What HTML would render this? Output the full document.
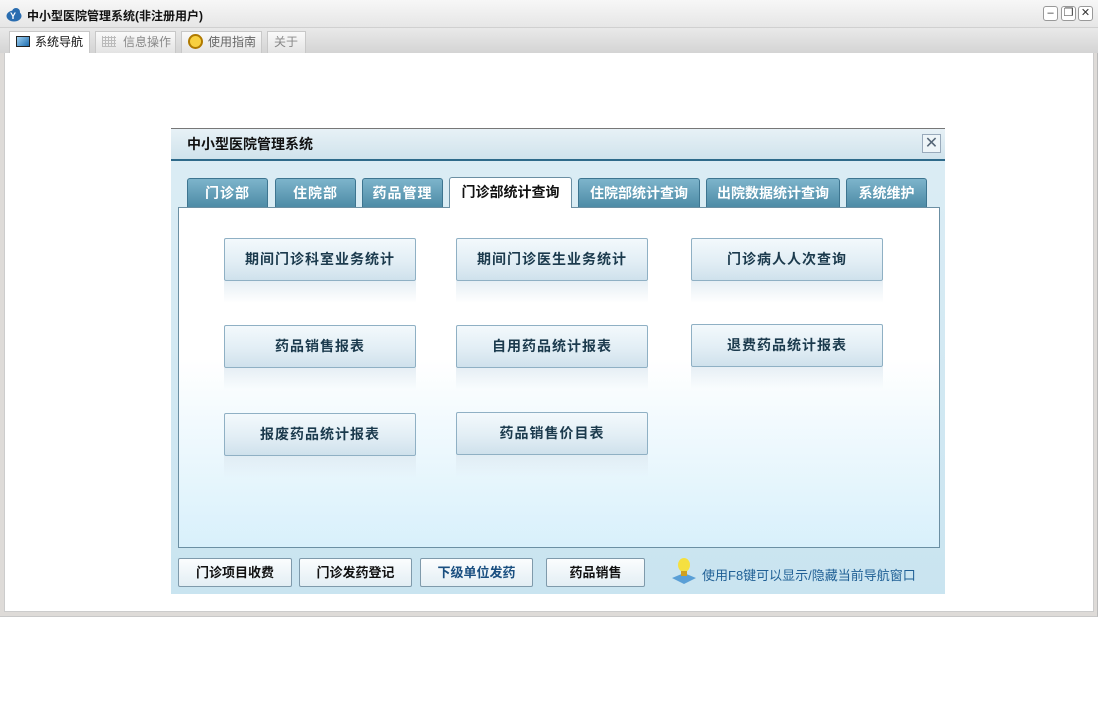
<!DOCTYPE html>
<html><head><meta charset="utf-8"><style>
*{margin:0;padding:0;box-sizing:border-box}
body{width:1098px;height:716px;background:#fff;position:relative;font-family:"Liberation Sans","Noto Sans CJK SC",sans-serif;overflow:hidden}
.abs{position:absolute}
.tb{left:0;top:0;width:1098px;height:28px;background:linear-gradient(#f7f7f7,#e6e6e6);border-bottom:1px solid #d0d0d0}
.frame{left:0;top:28px;width:1098px;height:589px;background:#dedbd8;border-right:1px solid #bbb;border-bottom:1px solid #c8c8c8}
.strip{left:0;top:28px;width:1098px;height:25px;background:linear-gradient(#e9e9e9,#d4d4d4)}
.otab{top:31px;height:22px;background:linear-gradient(#fafafa,#e3e3e3);border:1px solid #c8c8c8;border-bottom:none;font-size:12px;color:#888;line-height:20px;padding-left:6px}
.content{left:4px;top:53px;width:1090px;height:559px;border:1px solid #ccc;border-top:none;background:#fff}
.wb{top:6px;width:15px;height:15px;border:1px solid #999;border-radius:3px;background:#fff;font-size:11px;line-height:12px;text-align:center;color:#333}
.dlg{left:171px;top:128px;width:774px;height:466px;background:linear-gradient(#dcedf5,#c9e4f0);border-top:1px solid #777}
.dt{left:0;top:0;width:774px;height:32px;background:linear-gradient(#e7f1f6,#d0e3ec);border-bottom:2px solid #2e6a8a;font-size:14px;font-weight:bold;color:#111;line-height:30px;padding-left:16px}
.tab{top:49px;height:29px;background:linear-gradient(#7db4cb,#4d8ba6);color:#fff;font-weight:bold;font-size:14px;text-align:center;line-height:28px;border:1px solid #3d7590;border-bottom:none;border-radius:3px 3px 0 0;letter-spacing:1px}
.tab.act{top:48px;height:31px;background:#fff;color:#111;border-color:#6b8fa3;z-index:2}
.panel{left:7px;top:78px;width:762px;height:341px;border:1px solid #6b8fa3;background:linear-gradient(#fff 0%,#fff 45%,#d8f0fb 100%)}
.btn{width:192px;height:43px;border:1px solid #8fb0c4;border-radius:2px;background:linear-gradient(#f3f9fc,#e2eef5 55%,#cfe1ec);font-size:14px;font-weight:bold;color:#1b3a4d;text-align:center;line-height:41px;letter-spacing:1px}
.refl{width:192px;height:22px;background:linear-gradient(rgba(220,232,240,.7),rgba(255,255,255,0))}
.bb{top:429px;height:29px;border:1px solid #7f9aab;border-radius:2px;background:linear-gradient(#fbfdfe,#e3eef4);font-size:13px;font-weight:bold;text-align:center;line-height:27px;color:#111}
</style></head><body>
<div class="abs tb"></div>
<div class="abs frame"></div>
<svg class="abs" style="left:6px;top:7px" width="16" height="15"><ellipse cx="8" cy="9" rx="7.5" ry="5.5" fill="#2a6db0"/><circle cx="10" cy="5" r="4" fill="#2a6db0"/><text x="4" y="12" font-size="9" fill="#fff" font-weight="bold" font-family="Liberation Sans">Y</text></svg>
<div class="abs" style="left:27px;top:7px;font-size:12px;font-weight:bold;color:#111">中小型医院管理系统(非注册用户)</div>
<div class="abs wb" style="left:1043px">–</div>
<div class="abs wb" style="left:1061px">❐</div>
<div class="abs wb" style="left:1078px">✕</div>
<div class="abs strip"></div>
<div class="abs otab" style="left:9px;width:81px;background:#fff;color:#111;height:23px"><span style="display:inline-block;width:14px;height:11px;border:1px solid #222;background:linear-gradient(135deg,#9fd0f0,#1d6db0);vertical-align:-1px;margin-right:5px"></span>系统导航</div>
<div class="abs otab" style="left:95px;width:81px"><span style="display:inline-block;width:14px;height:11px;background:repeating-linear-gradient(90deg,#bbb 0 1px,transparent 1px 3px),repeating-linear-gradient(0deg,#bbb 0 1px,transparent 1px 3px);vertical-align:-1px;margin-right:7px"></span>信息操作</div>
<div class="abs otab" style="left:181px;width:81px;color:#666"><span style="display:inline-block;width:15px;height:15px;border-radius:50%;border:2px solid #b07a00;background:#f8d040;vertical-align:-3px;margin-right:5px"></span>使用指南</div>
<div class="abs otab" style="left:267px;width:39px">关于</div>
<div class="abs content"></div>

<div class="abs dlg">
<div class="abs dt">中小型医院管理系统</div>
<div class="abs" style="left:751px;top:5px;width:19px;height:19px;border:1px solid #9ab;background:#eef5f8;color:#567;font-size:16px;line-height:17px;text-align:center">✕</div>
<div class="abs tab" style="left:16px;width:81px">门诊部</div>
<div class="abs tab" style="left:104px;width:81px">住院部</div>
<div class="abs tab" style="left:191px;width:81px">药品管理</div>
<div class="abs tab act" style="left:278px;width:123px;letter-spacing:0">门诊部统计查询</div>
<div class="abs tab" style="left:407px;width:122px;letter-spacing:0">住院部统计查询</div>
<div class="abs tab" style="left:535px;width:134px;letter-spacing:0">出院数据统计查询</div>
<div class="abs tab" style="left:675px;width:81px;letter-spacing:0">系统维护</div>
<div class="abs panel"></div>

<div class="abs btn" style="left:53px;top:109px">期间门诊科室业务统计</div><div class="abs refl" style="left:53px;top:152px"></div>
<div class="abs btn" style="left:285px;top:109px">期间门诊医生业务统计</div><div class="abs refl" style="left:285px;top:152px"></div>
<div class="abs btn" style="left:520px;top:109px">门诊病人人次查询</div><div class="abs refl" style="left:520px;top:152px"></div>
<div class="abs btn" style="left:53px;top:196px">药品销售报表</div><div class="abs refl" style="left:53px;top:239px"></div>
<div class="abs btn" style="left:285px;top:196px">自用药品统计报表</div><div class="abs refl" style="left:285px;top:239px"></div>
<div class="abs btn" style="left:520px;top:195px">退费药品统计报表</div><div class="abs refl" style="left:520px;top:238px"></div>
<div class="abs btn" style="left:53px;top:284px">报废药品统计报表</div><div class="abs refl" style="left:53px;top:327px"></div>
<div class="abs btn" style="left:285px;top:283px">药品销售价目表</div><div class="abs refl" style="left:285px;top:326px"></div>

<div class="abs bb" style="left:7px;width:114px">门诊项目收费</div>
<div class="abs bb" style="left:128px;width:113px">门诊发药登记</div>
<div class="abs bb" style="left:249px;width:113px;color:#1a4f80">下级单位发药</div>
<div class="abs bb" style="left:375px;width:99px">药品销售</div>
<svg class="abs" style="left:499px;top:427px" width="28" height="30"><path d="M2 22 L14 28 L26 22 L14 17Z" fill="#5a9fd6"/><ellipse cx="14" cy="9" rx="6" ry="7" fill="#f5e040"/><rect x="11" y="15" width="6" height="5" fill="#d0a020"/></svg>
<div class="abs" style="left:531px;top:436px;font-size:13px;color:#1f5f95">使用F8键可以显示/隐藏当前导航窗口</div>
</div>
</body></html>
